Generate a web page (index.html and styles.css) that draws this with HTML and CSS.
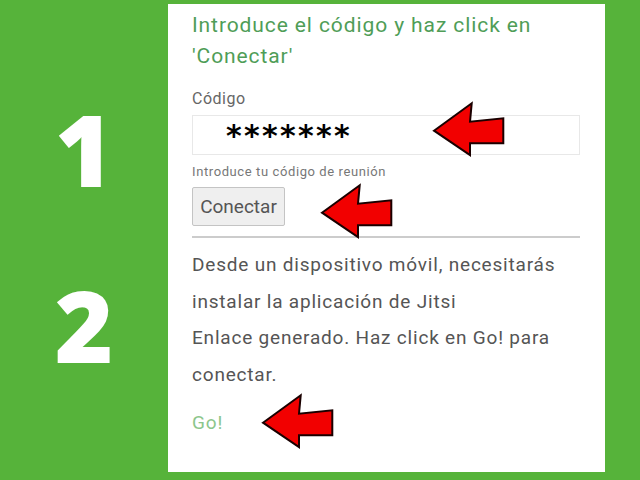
FILE: index.html
```html
<!DOCTYPE html>
<html lang="es">
<head>
    <meta charset="UTF-8">
    <meta name="viewport" content="width=device-width, initial-scale=1.0">
    <title>Conectar con Jitsi</title>
    <link rel="stylesheet" href="styles.css">
</head>
<body>
    <div class="steps">
        <div class="step-num">1</div>
        <div class="step-num">2</div>
    </div>

    <div class="panel">
        <h2 class="panel-title">Introduce el código y haz click en 'Conectar'</h2>

        <label class="field-label">Código</label>
        <div class="code-input">*******</div>
        <div class="field-hint">Introduce tu código de reunión</div>
        <button class="connect-button">Conectar</button>

        <hr class="divider">

        <p class="info-text">Desde un dispositivo móvil, necesitarás instalar la aplicación de Jitsi<br>Enlace generado. Haz click en Go! para conectar.</p>
        <a class="go-link">Go!</a>

        <!-- red arrows pointing at the fields -->
        <svg class="arrow arrow-code" viewBox="0 0 74 56" width="74" height="56">
            <polygon points="2,29.7 39.7,2.3 38,20.7 71.3,17.3 71.3,42.3 38,42.3 38,54" />
        </svg>
        <svg class="arrow arrow-button" viewBox="0 0 74 56" width="74" height="56">
            <polygon points="2,29.7 39.7,2.3 38,20.7 71.3,17.3 71.3,42.3 38,42.3 38,54" />
        </svg>
        <svg class="arrow arrow-go" viewBox="0 0 74 56" width="74" height="56">
            <polygon points="2,29.7 39.7,2.3 38,20.7 71.3,17.3 71.3,42.3 38,42.3 38,54" />
        </svg>
    </div>
</body>
</html>
```

FILE: styles.css
```css
body {
    margin: 0;
    height: 480px;
    background: #56b33a;
    display: flex;
    font-family: Roboto, "Liberation Sans", sans-serif;
    overflow: hidden;
}
.steps {
    width: 168px;
    padding-top: 98px;
    display: flex;
    flex-direction: column;
    align-items: center;
    gap: 76px;
}
.step-num {
    font-family: "Open Sans", "DejaVu Sans", sans-serif;
    font-weight: 800;
    font-size: 100px;
    line-height: 100px;
    height: 100px;
    color: white;
}
.panel {
    position: relative;
    margin-top: 4px;
    width: 437px;
    height: 468px;
    box-sizing: border-box;
    padding: 6px 25px 0 24px;
    background: white;
}
.panel-title {
    margin: 0;
    font-size: 21px;
    font-weight: normal;
    line-height: 31px;
    letter-spacing: 0.9px;
    color: #4f9d57;
}
.field-label {
    display: block;
    margin-top: 17px;
    font-size: 16px;
    line-height: 20px;
    letter-spacing: 0.5px;
    color: #666;
}
.code-input {
    margin-top: 6px;
    height: 40px;
    box-sizing: border-box;
    border: 1px solid #e8e8e8;
    padding-left: 33px;
    font-family: "DejaVu Sans", sans-serif;
    font-weight: bold;
    font-size: 30px;
    line-height: 40px;
    letter-spacing: 2.3px;
    color: #000;
}
.field-hint {
    margin-top: 9px;
    font-size: 13px;
    line-height: 16px;
    letter-spacing: 0.6px;
    color: #777;
}
.connect-button {
    display: block;
    margin-top: 7px;
    height: 39px;
    width: 93px;
    padding: 0;
    background: #efefef;
    border: 1px solid #c4c4c4;
    border-radius: 2px;
    font-family: Roboto, sans-serif;
    font-size: 19px;
    color: #555;
}
.divider {
    margin: 10px 0 0 0;
    border: none;
    height: 2px;
    background: #cccccc;
}
.info-text {
    margin: 9px 0 0 0;
    font-size: 19px;
    line-height: 36.5px;
    letter-spacing: 0.8px;
    color: #555;
}
.go-link {
    display: block;
    margin-top: 18px;
    font-size: 19px;
    line-height: 24px;
    letter-spacing: 0.8px;
    color: #8cc68c;
}
.arrow {
    position: absolute;
}
.arrow polygon {
    fill: #f20000;
    stroke: #1a0000;
    stroke-width: 2;
    stroke-linejoin: miter;
}
.arrow-code {
    left: 264px;
    top: 97px;
}
.arrow-button {
    left: 152px;
    top: 179px;
}
.arrow-go {
    left: 93px;
    top: 389px;
}
```
